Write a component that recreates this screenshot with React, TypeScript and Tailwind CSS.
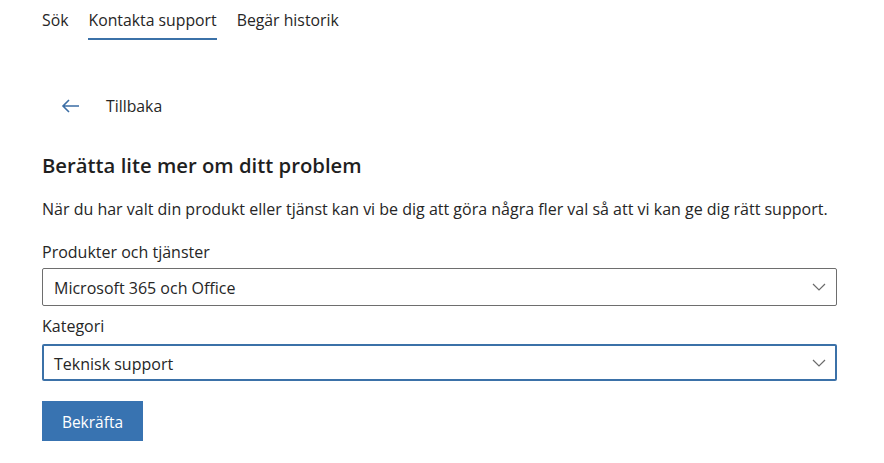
import React from "react";

const font = { fontFamily: '"Open Sans", "Noto Sans", sans-serif' };

function Chevron() {
  return (
    <svg width="14" height="8" viewBox="0 0 14 8" fill="none">
      <path d="M1 1 L7 7 L13 1" stroke="#6b6b6b" strokeWidth="1.2" />
    </svg>
  );
}

export default function App() {
  return (
    <div className="min-h-[463px] w-[884px] bg-white text-[#262626]" style={font}>
      <div className="flex gap-[20px] pl-[42px] pt-[8px] text-[15.8px]">
        <div className="h-[33px] leading-[24px]">Sök</div>
        <div className="flex h-[33px] flex-col">
          <span className="leading-[24px]">Kontakta support</span>
          <span className="mt-[6px] h-[2px] w-full bg-[#3b71a8]" />
        </div>
        <div className="h-[33px] leading-[24px]">Begär historik</div>
      </div>

      <div className="flex items-center gap-[26px] pl-[61px] pt-[53px]">
        <svg width="19" height="14" viewBox="0 0 19 14" fill="none">
          <path d="M18 7 H2 M8 1 L2 7 L8 13" stroke="#3b6ea5" strokeWidth="1.6" />
        </svg>
        <span className="text-[15.8px] leading-[24px]">Tillbaka</span>
      </div>

      <div className="px-[42px] pt-[33px]">
        <h1 className="text-[20.3px] font-semibold leading-[28px] text-[#1f1f1f]">
          Berätta lite mer om ditt problem
        </h1>
        <p className="mt-[18px] text-[16px] leading-[24px]">
          När du har valt din produkt eller tjänst kan vi be dig att göra några fler val så att vi kan ge dig rätt support.
        </p>

        <div className="mt-[19px] text-[16px] leading-[24px]">Produkter och tjänster</div>
        <div className="mt-[4px] flex h-[38px] w-[795px] items-center justify-between rounded-[2px] border border-[#6e6e6e] pl-[11px] pr-[10px] text-[16px]">
          <span className="pt-[2px]">Microsoft 365 och Office</span>
          <Chevron />
        </div>

        <div className="mt-[8px] text-[16px] leading-[24px]">Kategori</div>
        <div className="mt-[6px] flex h-[37px] w-[795px] items-center justify-between rounded-[2px] border-2 border-[#3b71a8] pl-[10px] pr-[9px] text-[16px]">
          <span className="pt-[2px]">Teknisk support</span>
          <Chevron />
        </div>

        <button className="mt-[20px] flex h-[40px] w-[101px] items-center justify-center bg-[#3873b1] pt-[3px] text-[15.5px] text-white">
          Bekräfta
        </button>
      </div>
    </div>
  );
}
